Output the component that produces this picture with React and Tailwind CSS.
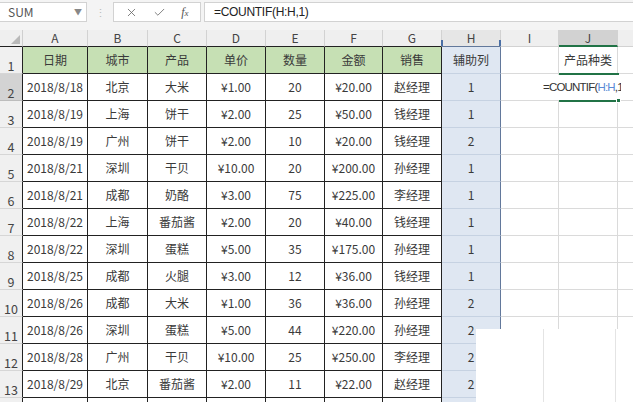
import React from 'react';
import { X, Check } from 'lucide-react';

const W = ['w-[65px]', 'w-[60px]', 'w-[59px]', 'w-[59px]', 'w-[59px]', 'w-[58px]', 'w-[59px]'];
const LETTERS = ['A', 'B', 'C', 'D', 'E', 'F', 'G'];

const rows = [
  ['2018/8/18', '北京', '大米', '¥1.00', '20', '¥20.00', '赵经理', '1'],
  ['2018/8/19', '上海', '饼干', '¥2.00', '25', '¥50.00', '钱经理', '1'],
  ['2018/8/19', '广州', '饼干', '¥2.00', '10', '¥20.00', '钱经理', '2'],
  ['2018/8/21', '深圳', '干贝', '¥10.00', '20', '¥200.00', '孙经理', '1'],
  ['2018/8/21', '成都', '奶酪', '¥3.00', '75', '¥225.00', '李经理', '1'],
  ['2018/8/22', '上海', '番茄酱', '¥2.00', '20', '¥40.00', '钱经理', '1'],
  ['2018/8/22', '深圳', '蛋糕', '¥5.00', '35', '¥175.00', '孙经理', '1'],
  ['2018/8/25', '成都', '火腿', '¥3.00', '12', '¥36.00', '钱经理', '1'],
  ['2018/8/26', '成都', '大米', '¥1.00', '36', '¥36.00', '孙经理', '2'],
  ['2018/8/26', '深圳', '蛋糕', '¥5.00', '44', '¥220.00', '孙经理', '2'],
  ['2018/8/28', '广州', '干贝', '¥10.00', '25', '¥250.00', '李经理', '2'],
  ['2018/8/29', '北京', '番茄酱', '¥2.00', '11', '¥22.00', '赵经理', '2'],
];

function RowHead({ n, active }) {
  return (
    <div
      className={`w-[23px] shrink-0 flex items-end justify-center pb-[1px] border-b border-r text-[12.5px] leading-none ${
        active ? 'bg-[#D3D3D3] border-b-[#BDBDBD] border-r-[#222]' : 'bg-[#F0F0F0] border-b-[#D6D6D6] border-r-[#222]'
      } text-[#444]`}
    >
      {n}
    </div>
  );
}

function DataRow({ n, cells, h, j, header, active }) {
  return (
    <div className="flex h-[27px] shrink-0">
      <RowHead n={n} active={active} />
      {cells.map((c, i) => (
        <div
          key={i}
          className={`${W[i]} shrink-0 flex items-center justify-center border-b border-r border-[#222] ${
            header ? 'bg-[#C6E0B4]' : 'bg-white'
          }`}
        >
          {c}
        </div>
      ))}
      <div className="w-[59px] shrink-0 flex items-center justify-center bg-[#DFE7F2] border-b border-r border-b-[#C6D2E2] border-r-[#62789B]">
        {h}
      </div>
      <div className="w-[58px] shrink-0 border-b border-r border-[#DADADA] bg-white" />
      <div className="w-[59px] shrink-0 flex items-center justify-center border-b border-r border-[#DADADA] bg-white">
        {j}
      </div>
      <div className="flex-1 border-b border-[#DADADA] bg-white" />
    </div>
  );
}

export default function App() {
  return (
    <div
      className="relative w-[633px] h-[402px] overflow-hidden bg-white text-[12px] text-[#3A3A3A] flex flex-col"
      style={{ fontFamily: '"Noto Sans CJK SC", "Noto Sans", sans-serif' }}
    >
      {/* Formula bar */}
      <div className="h-[30px] shrink-0 bg-[#F4F4F4] flex items-start pt-[2px] gap-0">
        <div className="w-[87px] h-[20px] shrink-0 bg-white border border-l-0 border-[#D2D2D2] flex items-center justify-between pl-[8px] pr-[4px]">
          <span className="text-[12px] text-[#555] leading-none">SUM</span>
          <span className="text-[8px] text-[#888] leading-none">▼</span>
        </div>
        <div className="w-[26px] h-[20px] shrink-0 flex items-center justify-center text-[11px] text-[#BBB]">⋮</div>
        <div className="w-[88px] h-[20px] shrink-0 bg-white border border-[#D2D2D2] flex items-center justify-around px-[4px]">
          <X size={13} strokeWidth={1.5} color="#666" />
          <Check size={13} strokeWidth={1.5} color="#666" />
          <span
            className="text-[12px] italic text-[#555] leading-none"
            style={{ fontFamily: '"Liberation Serif", serif' }}
          >
            f<span className="text-[9px]">x</span>
          </span>
        </div>
        <div
          className="flex-1 h-[20px] ml-[3px] bg-white border border-r-0 border-[#D2D2D2] flex items-center pl-[9px] text-[12px] tracking-[-0.3px] text-[#222]"
          style={{ fontFamily: '"Liberation Sans", Arial, sans-serif' }}
        >
          =COUNTIF(H:H,1)
        </div>
      </div>

      {/* Column headers */}
      <div className="flex h-[17px] shrink-0 bg-[#EFEFEF] text-[#444] text-[12px] leading-none">
        <div className="w-[23px] shrink-0 relative border-r border-b border-[#CFCFCF] border-b-[#222]">
          <svg className="absolute right-[2px] bottom-[2px]" width="9" height="9" viewBox="0 0 9 9">
            <polygon points="9,0 9,9 0,9" fill="#B9B9B9" />
          </svg>
        </div>
        {LETTERS.map((l, i) => (
          <div
            key={l}
            className={`${W[i]} shrink-0 flex items-center justify-center border-r border-b border-r-[#D2D2D2] border-b-[#222]`}
          >
            {l}
          </div>
        ))}
        <div className="w-[59px] shrink-0 relative flex items-center justify-center border-r border-b border-r-[#D2D2D2] border-b-[#62789B] bg-[#E6E6E6]">
          H
          <div className="absolute left-[-1px] bottom-0 w-[2px] h-[6px] bg-[#4A6FA5]" />
          <div className="absolute right-[-1px] bottom-0 w-[2px] h-[6px] bg-[#4A6FA5]" />
        </div>
        <div className="w-[58px] shrink-0 flex items-center justify-center border-r border-b border-[#D2D2D2]">I</div>
        <div className="w-[59px] shrink-0 flex items-center justify-center border-r border-r-[#D2D2D2] border-b-2 border-b-[#217346] bg-[#D2D2D2]">
          J
        </div>
        <div className="flex-1 border-b border-[#D2D2D2]" />
      </div>

      {/* Rows */}
      <DataRow n="1" header cells={['日期', '城市', '产品', '单价', '数量', '金额', '销售']} h="辅助列" j="产品种类" />
      {rows.map((r, idx) => (
        <DataRow key={idx} n={String(idx + 2)} cells={r.slice(0, 7)} h={r[7]} j="" active={idx === 0} />
      ))}
      <DataRow n="" cells={['', '', '', '', '', '', '']} h="" j="" />

      {/* Active cell J2 editing */}
      <div
        className="absolute left-[543px] top-[75px] w-[78px] h-[25px] bg-white overflow-hidden whitespace-nowrap flex items-center text-[11.5px] tracking-[-0.8px] text-[#333]"
        style={{ fontFamily: '"Liberation Sans", Arial, sans-serif' }}
      >
        <span>
          =COUNTIF(<span className="text-[#5A8AD6]">H:H</span>,1)
        </span>
      </div>
      <div className="absolute left-[559px] top-[73px] w-[60px] h-[2px] bg-[#217346]" />
      <div className="absolute left-[559px] top-[100px] w-[60px] h-[2px] bg-[#217346]" />
      <div className="absolute left-[616px] top-[98px] w-[5px] h-[5px] bg-[#217346] border border-white" />

      {/* pasted white patch */}
      <div className="absolute left-[476px] top-[329px] w-[157px] h-[73px] bg-white">
        <div className="absolute left-[67px] top-0 w-px h-full bg-[#E4E4E4]" />
        <div className="absolute left-[139px] top-0 w-px h-full bg-[#E4E4E4]" />
      </div>
    </div>
  );
}
